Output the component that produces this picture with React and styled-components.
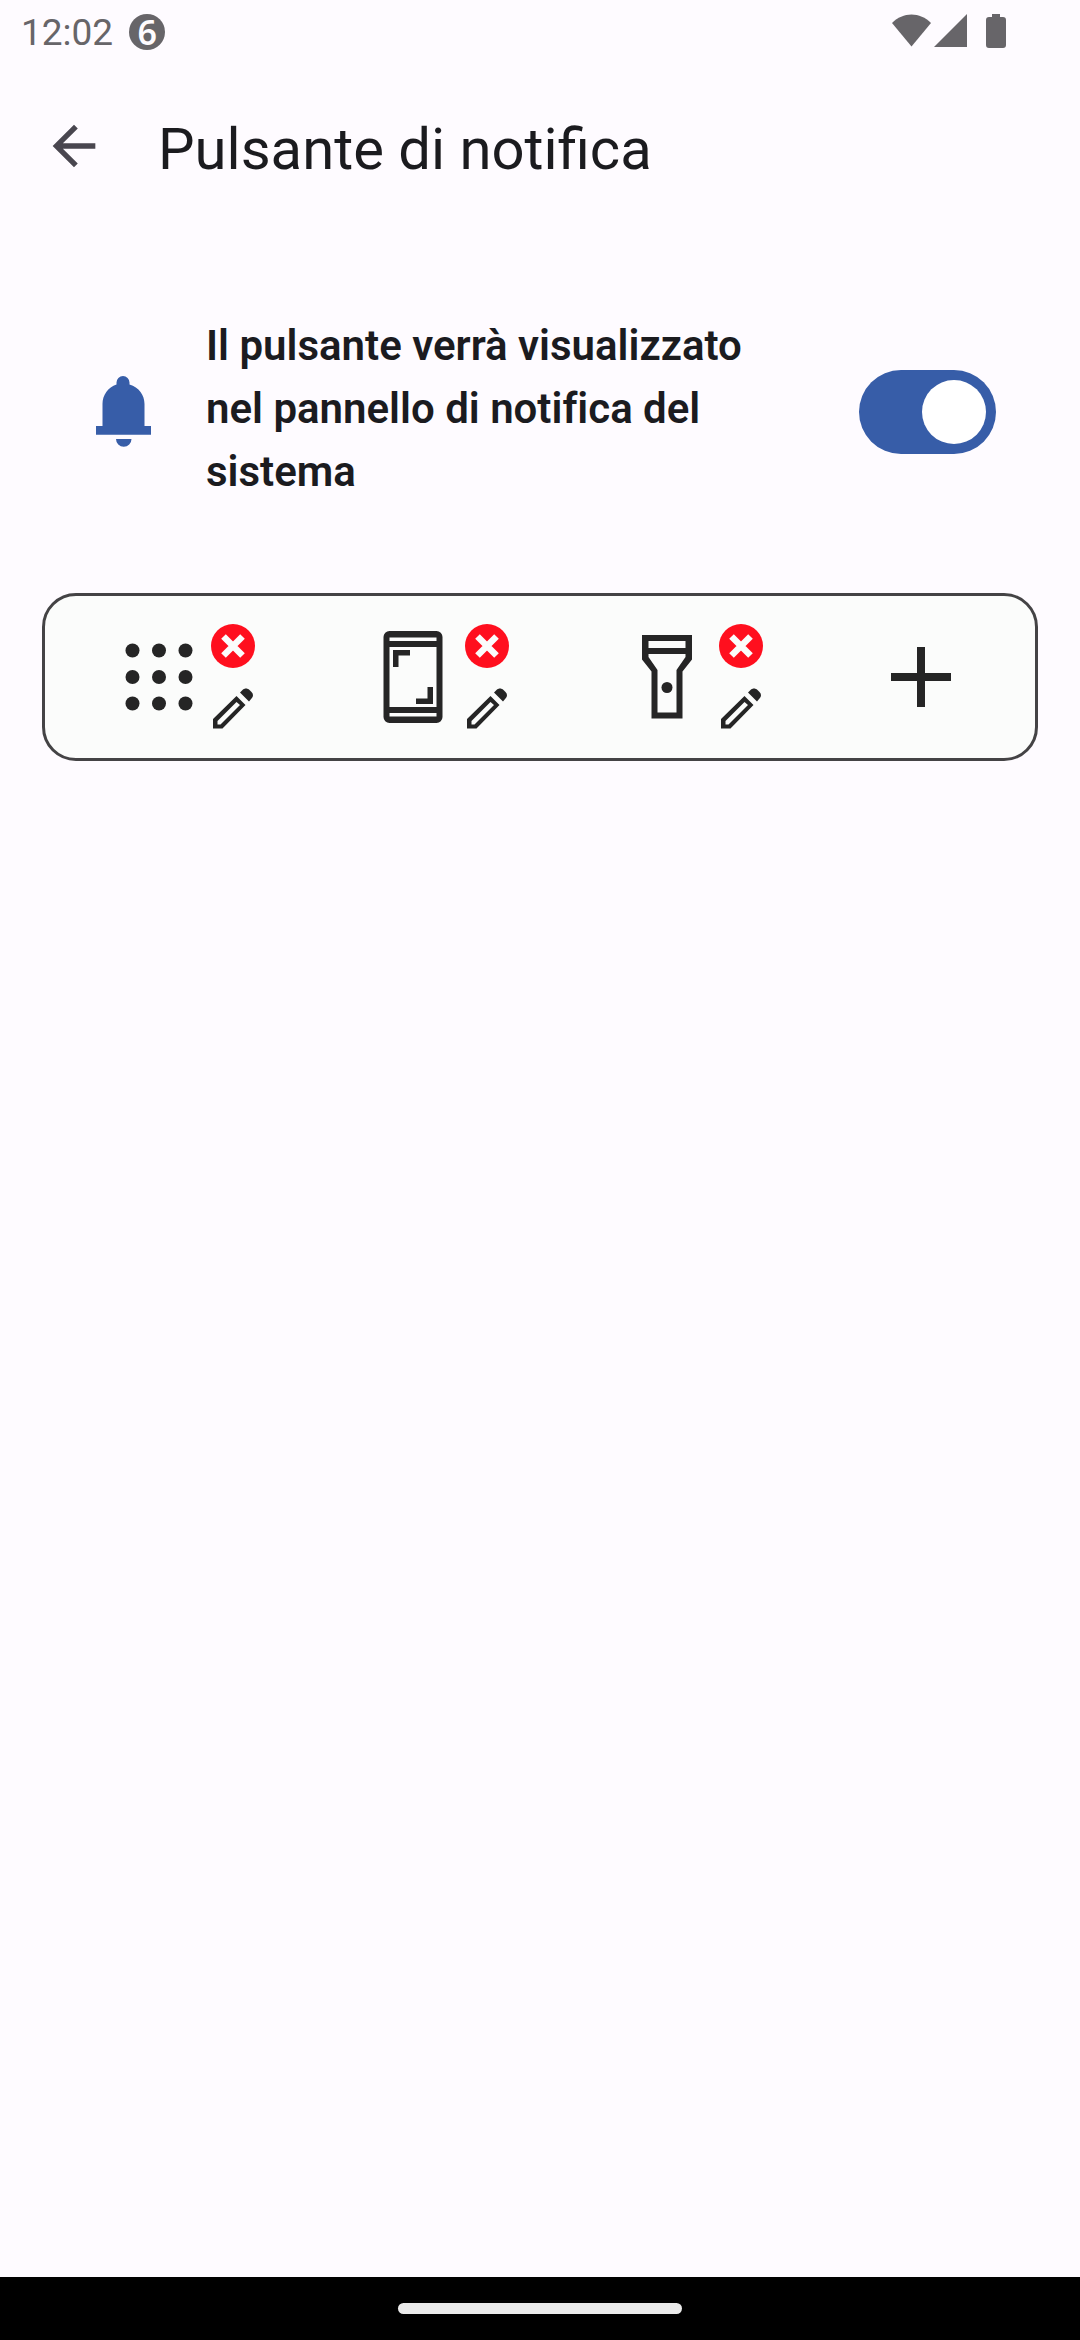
import React, { useState } from "react";
import styled, { createGlobalStyle, ThemeProvider } from "styled-components";

const theme = {
  primary: "#375da8",
  background: "#fefbff",
  surface: "#fbfcfb",
  text: "#1b1b1f",
  icon: "#252525",
  muted: "#676569",
  outline: "#444345",
  danger: "#ff0f1e",
};

const GlobalStyles = createGlobalStyle`
  * {
    box-sizing: border-box;
  }
  body {
    margin: 0;
    background-color: ${theme.background};
    font-family: Roboto, "Liberation Sans", sans-serif;
  }
  button {
    display: flex;
    padding: 0;
    border: none;
    background: none;
    color: inherit;
    cursor: pointer;
  }
  svg {
    display: block;
    flex-shrink: 0;
  }
`;

const PageStyles = styled.div`
  display: flex;
  flex-direction: column;
  min-height: 100vh;
  color: ${(props) => props.theme.text};
`;

const StatusBarStyles = styled.div`
  display: flex;
  justify-content: space-between;
  align-items: center;
  height: 64px;
  padding: 0 74px 0 21px;
  color: ${(props) => props.theme.muted};
  .status-left {
    display: flex;
    align-items: center;
    gap: 16px;
  }
  .status-time {
    font-size: 37px;
    line-height: 44px;
    padding-top: 2px;
  }
  .status-badge {
    display: flex;
    justify-content: center;
    align-items: center;
    width: 36px;
    height: 36px;
    border-radius: 50%;
    background-color: ${(props) => props.theme.muted};
    color: ${(props) => props.theme.background};
    font-family: "Noto Sans", sans-serif;
    font-size: 34px;
    font-weight: 600;
    line-height: 36px;
  }
`;

const AppBar = styled.header`
  display: flex;
  align-items: center;
  gap: 52px;
  height: 168px;
  padding: 0 42px 4px;
`;

const BackButton = styled.button`
  color: #49464f;
`;

const Title = styled.h1`
  margin: 0;
  padding-top: 6px;
  font-size: 58px;
  font-weight: 400;
  line-height: 68px;
`;

const SettingRow = styled.div`
  display: flex;
  align-items: center;
  gap: 42px;
  padding: 82px 84px 0;
  color: ${(props) => props.theme.primary};
`;

const SettingLabel = styled.label`
  flex: 1;
  padding: 0 42px 6px 0;
  color: ${(props) => props.theme.text};
  font-size: 42px;
  font-weight: 600;
  font-variant-ligatures: none;
  line-height: 63px;
`;

const Switch = styled.input`
  appearance: none;
  display: flex;
  align-items: center;
  justify-content: ${(props) => (props.checked ? "flex-end" : "flex-start")};
  flex-shrink: 0;
  width: 137px;
  height: 84px;
  margin: 0;
  padding: 0 10px;
  border-radius: 42px;
  background-color: ${(props) =>
    props.checked ? props.theme.primary : "#c7c6ca"};
  cursor: pointer;
  &::before {
    content: "";
    width: 64px;
    height: 64px;
    border-radius: 50%;
    background-color: white;
  }
`;

const Panel = styled.section`
  display: grid;
  grid-template-columns: repeat(3, 1fr) 228px;
  height: 168px;
  margin: 84px 42px 0;
  border: 3px solid ${(props) => props.theme.outline};
  border-radius: 34px;
  background-color: ${(props) => props.theme.surface};
  color: ${(props) => props.theme.icon};
`;

const PanelItem = styled.div`
  display: flex;
  justify-content: center;
  align-items: center;
  gap: 6px;
  padding-left: ${(props) => (props.$hasActions ? "24px" : "0")};
`;

const Actions = styled.div`
  display: flex;
  flex-direction: column;
  gap: 20px;
`;

const NavigationBar = styled.footer`
  display: flex;
  justify-content: center;
  align-items: center;
  height: 63px;
  margin-top: auto;
  background-color: black;
  .handle {
    width: 284px;
    height: 11px;
    border-radius: 6px;
    background-color: #ebebeb;
  }
`;

const ArrowIcon = () => (
  <svg width="64" height="64" viewBox="0 0 24 24" fill="currentColor">
    <path d="M20 11H7.83l5.59-5.59L12 4l-8 8 8 8 1.41-1.41L7.83 13H20z" />
  </svg>
);

const BellIcon = () => (
  <svg width="80" height="80" viewBox="0 0 80 80" fill="currentColor">
    <path d="M12 54h6.500V32c0-9 5.500-16.500 14-19.500V10.500a6.500 6.500 0 0 1 13 0V12.500C55 15.500 60.500 23 60.500 32V54H67v8.700H12zM32 67h15.500a7.700 7.700 0 0 1-15.500 0z" />
  </svg>
);

const StatusIcons = () => (
  <svg width="115" height="36" viewBox="891 14 115 36" fill="currentColor">
    <path d="M892 23C903 11.500 920 11.500 931 23L911.500 46.500z" />
    <path d="M967 14v33h-33z" />
    <path d="M992 14h8v3h3a3 3 0 0 1 3 3v25a3 3 0 0 1-3 3h-14a3 3 0 0 1-3-3V20a3 3 0 0 1 3-3h3z" />
  </svg>
);

const AppsIcon = () => (
  <svg width="92" height="96" viewBox="-46 -48 92 96" fill="currentColor">
    {[-26.5, 0, 26.5].map((y) =>
      [-26.5, 0, 26.5].map((x) => (
        <circle key={`${x}${y}`} cx={x} cy={y} r="7" />
      ))
    )}
  </svg>
);

const PhoneIcon = () => (
  <svg width="92" height="96" viewBox="-46 -48 92 96" fill="currentColor">
    <path
      fillRule="evenodd"
      d="M-23.500-46h47a6 6 0 0 1 6 6v80a6 6 0 0 1-6 6h-47a6 6 0 0 1-6-6v-80a6 6 0 0 1 6-6zM-23.500-39.500v3.500h47v-3.500zM-23.500-30v60h47v-60zM-23.500 36v3.500h47v-3.500z"
    />
    <path d="M-20-27h17v5.500h-11.500v11.500h-5.500zM20 27h-17v-5.500h11.500v-11.500h5.500z" />
  </svg>
);

const TorchIcon = () => (
  <svg width="92" height="96" viewBox="-46 -48 92 96" fill="currentColor">
    <path
      fillRule="evenodd"
      d="M-25-42h50v24.500l-9.500 12V41.500h-31V-5.500l-9.500-12zM-18.500-36v7h37v-7zM-18.500-23v3l9 13V35.500h19V-7l9-13v-3z"
    />
    <circle cx="0" cy="10.500" r="5.500" />
  </svg>
);

const PlusIcon = () => (
  <svg width="60" height="60" viewBox="0 0 60 60" fill="currentColor">
    <path d="M26 0h8v26h26v8H34v26h-8V34H0v-8h26z" />
  </svg>
);

const RemoveIcon = () => (
  <svg width="44" height="44" viewBox="0 0 44 44">
    <circle cx="22" cy="22" r="22" fill={theme.danger} />
    <path
      d="M12.500 12.500l19 19M31.500 12.500l-19 19"
      stroke={theme.surface}
      strokeWidth="6.500"
    />
  </svg>
);

const EditIcon = () => (
  <svg width="44" height="42" viewBox="-2 0 44 42" fill="currentColor">
    <path
      fillRule="evenodd"
      d="M0 40.500V31L23.500 8 32.500 17 9.500 40.500zM4.500 36.500H7.500L27 17 23.500 14 4.500 33z"
    />
    <path d="M27 4.500L29.500 2C31.500 0 34.500 0 36.500 2L38.500 4C40.500 6 40.500 8.500 38.500 10.500L36 13.500z" />
  </svg>
);

const items = [
  { id: "apps", name: "App", icon: AppsIcon },
  { id: "screen", name: "Schermo", icon: PhoneIcon },
  { id: "torch", name: "Torcia", icon: TorchIcon },
];

const App = () => {
  const [enabled, setEnabled] = useState(true);
  return (
    <ThemeProvider theme={theme}>
      <GlobalStyles />
      <PageStyles>
        <StatusBarStyles>
          <div className="status-left">
            <span className="status-time">12:02</span>
            <span className="status-badge">6</span>
          </div>
          <StatusIcons />
        </StatusBarStyles>
        <AppBar>
          <BackButton type="button" aria-label="Indietro">
            <ArrowIcon />
          </BackButton>
          <Title>Pulsante di notifica</Title>
        </AppBar>
        <main>
          <SettingRow>
            <BellIcon />
            <SettingLabel htmlFor="notification">
              Il pulsante verrà visualizzato nel pannello di notifica del
              sistema
            </SettingLabel>
            <Switch
              id="notification"
              type="checkbox"
              role="switch"
              checked={enabled}
              onChange={() => setEnabled(!enabled)}
            />
          </SettingRow>
          <Panel>
            {items.map(({ id, name, icon: Icon }) => (
              <PanelItem key={id} $hasActions>
                <button type="button" aria-label={name}>
                  <Icon />
                </button>
                <Actions>
                  <button type="button" aria-label={`Rimuovi ${name}`}>
                    <RemoveIcon />
                  </button>
                  <button type="button" aria-label={`Modifica ${name}`}>
                    <EditIcon />
                  </button>
                </Actions>
              </PanelItem>
            ))}
            <PanelItem>
              <button type="button" aria-label="Aggiungi">
                <PlusIcon />
              </button>
            </PanelItem>
          </Panel>
        </main>
        <NavigationBar>
          <div className="handle" />
        </NavigationBar>
      </PageStyles>
    </ThemeProvider>
  );
};

export default App;
